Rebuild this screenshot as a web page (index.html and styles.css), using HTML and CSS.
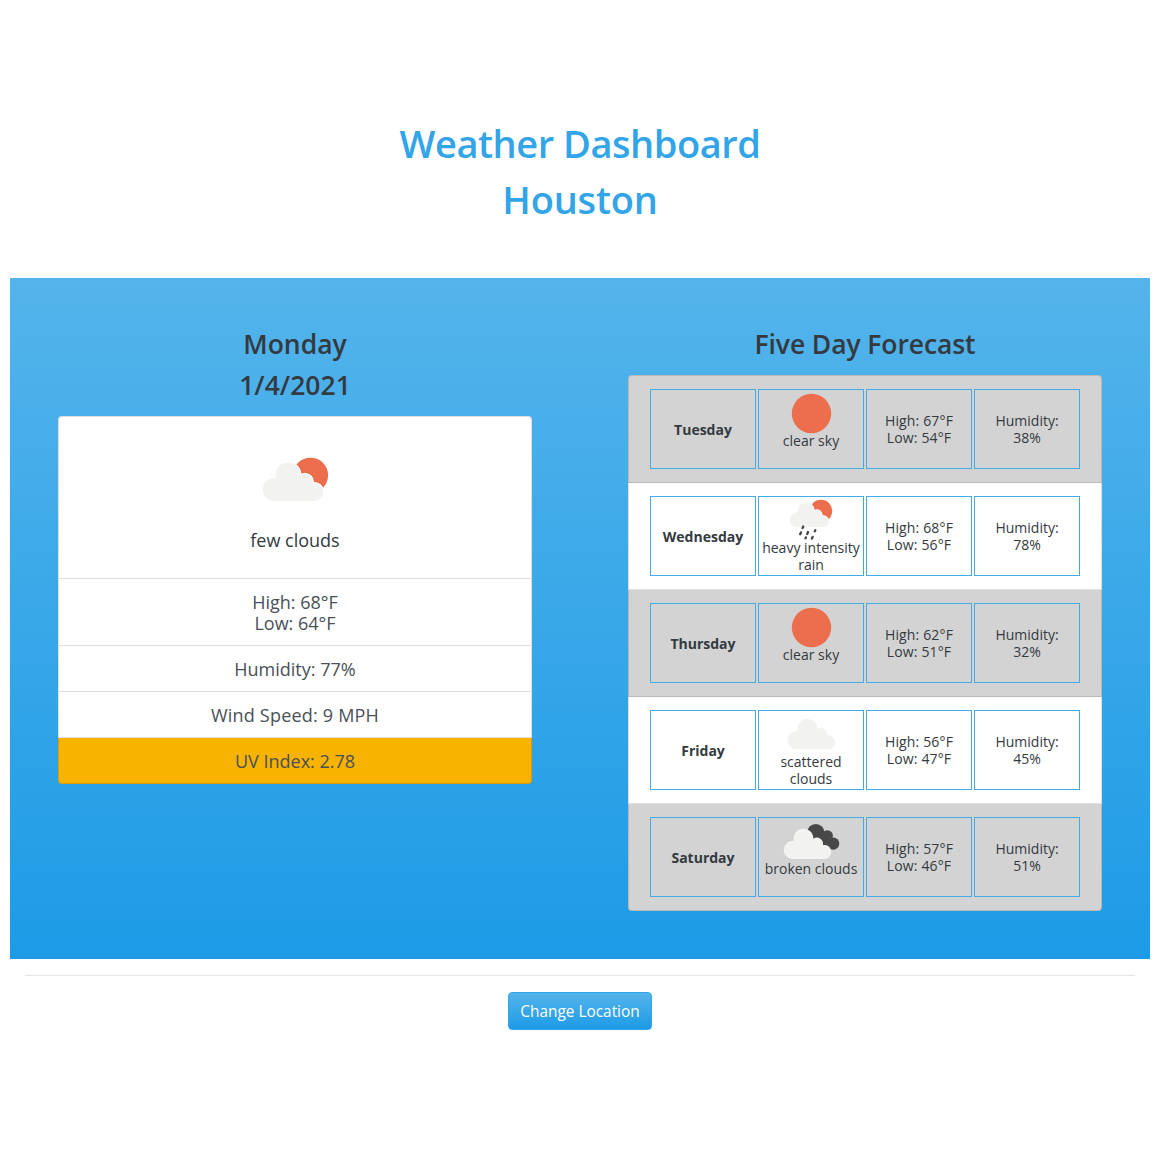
FILE: index.html
```html
<!DOCTYPE html>
<html lang="en">
<head>
<meta charset="utf-8">
<title>Weather Dashboard</title>
<link rel="stylesheet" href="styles.css">
</head>
<body>
<svg class="defs" aria-hidden="true">
  <symbol id="cloud" viewBox="0 0 60 38" overflow="visible">
    <path d="M11.5 38A11.5 11.5 0 1 1 12.8 15.1A12.5 12.5 0 1 1 37.4 12.4A7.8 7.8 0 0 1 49.5 20.4A8.9 8.9 0 1 1 51 38Z"/>
  </symbol>
</svg>
<div class="container">
  <header class="header">
    <h1>Weather Dashboard</h1>
    <h1 class="city">Houston</h1>
  </header>
  <main class="panel">
    <section class="column">
      <h2 class="day">Monday</h2>
      <h2 class="date">1/4/2021</h2>
      <ul class="list today">
        <li class="summary">
          <svg class="icon-large" viewBox="0 0 110 80">
            <clipPath id="sunclip"><circle cx="70.5" cy="35.3" r="17.6"/></clipPath>
            <circle cx="70.5" cy="35.3" r="17.6" fill="#ec6e4c"/>
            <g clip-path="url(#sunclip)"><use href="#cloud" x="23" y="23" width="60" height="38" fill="#fff" stroke="#e8603a" stroke-width="3.8"/></g>
            <use href="#cloud" x="23" y="23" width="60" height="38" fill="#f2f2f0" stroke="#fff" stroke-width="2.2"/>
            <use href="#cloud" x="23" y="23" width="60" height="38" fill="#f2f2f0"/>
          </svg>
          <span>few clouds</span>
        </li>
        <li class="temps"><div>High: 68°F</div><div>Low: 64°F</div></li>
        <li>Humidity: 77%</li>
        <li class="wind">Wind Speed: 9 MPH</li>
        <li class="uv">UV Index: 2.78</li>
      </ul>
    </section>
    <section class="column">
      <h2 class="five">Five Day Forecast</h2>
      <ul class="list forecast">
        <li>
          <div class="cell name">Tuesday</div>
          <div class="cell sky"><svg class="icon" viewBox="0 0 60 42"><circle cx="30.5" cy="23.5" r="19.7" fill="#ec6e4c"/></svg><span>clear sky</span></div>
          <div class="cell temp">High: 67°F<br>Low: 54°F</div>
          <div class="cell">Humidity:<br>38%</div>
        </li>
        <li>
          <div class="cell name">Wednesday</div>
          <div class="cell sky"><svg class="icon" viewBox="0 0 60 42">
            <circle cx="40" cy="14" r="11.2" fill="#ec6e4c"/>
            <use href="#cloud" x="9" y="5.8" width="38.7" height="24.5" fill="#f2f2f0" stroke="#fff" stroke-width="1.6"/>
            <use href="#cloud" x="9" y="5.8" width="38.7" height="24.5" fill="#f2f2f0"/>
            <path d="M22.2 29.6l-.6 1.4M20 35.4l-.8 1.8M27 35.1l-.8 1.8M24.9 40.4l-.4 .9M34.3 33.2l-.5 1M31.6 39.9l-.7 1.7" stroke="#484849" stroke-width="2.4" stroke-linecap="round"/>
          </svg><span>heavy intensity<br>rain</span></div>
          <div class="cell temp">High: 68°F<br>Low: 56°F</div>
          <div class="cell">Humidity:<br>78%</div>
        </li>
        <li>
          <div class="cell name">Thursday</div>
          <div class="cell sky"><svg class="icon" viewBox="0 0 60 42"><circle cx="30.5" cy="23.5" r="19.7" fill="#ec6e4c"/></svg><span>clear sky</span></div>
          <div class="cell temp">High: 62°F<br>Low: 51°F</div>
          <div class="cell">Humidity:<br>32%</div>
        </li>
        <li>
          <div class="cell name">Friday</div>
          <div class="cell sky"><svg class="icon" viewBox="0 0 60 42"><use href="#cloud" x="6.7" y="8.3" width="47.4" height="30" fill="#f2f2f0"/></svg><span>scattered<br>clouds</span></div>
          <div class="cell temp">High: 56°F<br>Low: 47°F</div>
          <div class="cell">Humidity:<br>45%</div>
        </li>
        <li>
          <div class="cell name">Saturday</div>
          <div class="cell sky"><svg class="icon" viewBox="0 0 60 42">
            <g fill="#484849"><circle cx="34.8" cy="14.6" r="8.7"/><circle cx="46.3" cy="17.8" r="5.6"/><circle cx="52.2" cy="25.6" r="6.1"/><path d="M34 18l12-3 6 6v10H40z"/></g>
            <use href="#cloud" x="2.7" y="11" width="47.6" height="30" fill="#f2f2f0"/>
          </svg><span>broken clouds</span></div>
          <div class="cell temp">High: 57°F<br>Low: 46°F</div>
          <div class="cell">Humidity:<br>51%</div>
        </li>
      </ul>
    </section>
  </main>
  <footer class="footer">
    <button class="button" type="button">Change Location</button>
  </footer>
</div>
</body>
</html>
```
FILE: styles.css
```css
* { box-sizing: border-box; }

body {
  margin: 0;
  background: #fff;
  color: #343a40;
  font-family: "Open Sans", "Noto Sans", sans-serif;
}

.defs { position: absolute; width: 0; height: 0; }

.container { width: 1140px; margin-left: 10px; }

.header { height: 278px; padding-top: 119px; text-align: center; }

h1, h2, ul { margin: 0; padding: 0; }

h1 {
  color: #32a4e8;
  font-size: 38px;
  font-weight: 600;
  line-height: 48px;
  letter-spacing: -.45px;
  margin-bottom: 8px;
}

.city { letter-spacing: -.2px; }

.panel {
  display: flex;
  gap: 96px;
  height: 681px;
  padding: 50px 48px 0;
  background: linear-gradient(#54b4eb, #1d9be6);
}

.column { width: 474px; text-align: center; }

h2 { font-size: 26.5px; font-weight: 600; line-height: 33px; margin-bottom: 8px; }
.date { margin-bottom: 14px; }
.five { margin-bottom: 14px; letter-spacing: -.1px; }

.list { list-style: none; }

.list li {
  background: #fff;
  border: 1px solid rgba(0, 0, 0, .125);
}

.list li + li { border-top: 0; }
.list li:first-child { border-radius: 4px 4px 0 0; }
.list li:last-child { border-radius: 0 0 4px 4px; }

.today { font-size: 18px; line-height: 21px; color: #495057; }
.today li { height: 46px; padding-top: 13px; }
.today .summary { height: 163px; padding-top: 23px; color: #343a40; }
.today .temps { height: 67px; }
.today .wind { letter-spacing: .2px; }
.today .uv { background: #f8b200; }
.icon-large { display: block; width: 110px; height: 80px; margin: 0 auto 10px 181px; }

.forecast { font-size: 14px; line-height: 17px; }
.forecast li { display: flex; gap: 2px; height: 107px; padding: 13px 21px; }
.forecast li:first-child { height: 108px; }
.forecast li:nth-child(odd) { background: #d3d3d3; }

.cell {
  display: flex;
  flex-direction: column;
  align-items: center;
  justify-content: center;
  width: 106px;
  height: 80px;
  border: 1px solid #42abe8;
  white-space: nowrap;
}

.name { font-weight: 700; }
.temp { letter-spacing: .15px; }
.sky { justify-content: flex-start; }
.icon { display: block; flex: none; width: 60px; height: 42px; overflow: visible; }

.footer {
  margin: 16px 15px 0;
  padding-top: 16px;
  border-top: 1px solid rgba(0, 0, 0, .1);
  text-align: center;
}

.button {
  width: 144px;
  height: 38px;
  padding: 0;
  color: #fff;
  font: 15.4px "Open Sans", "Noto Sans", sans-serif;
  background: linear-gradient(#54b4eb, #1d9be6);
  border: 1px solid #2fa4e7;
  border-radius: 4px;
}
```
